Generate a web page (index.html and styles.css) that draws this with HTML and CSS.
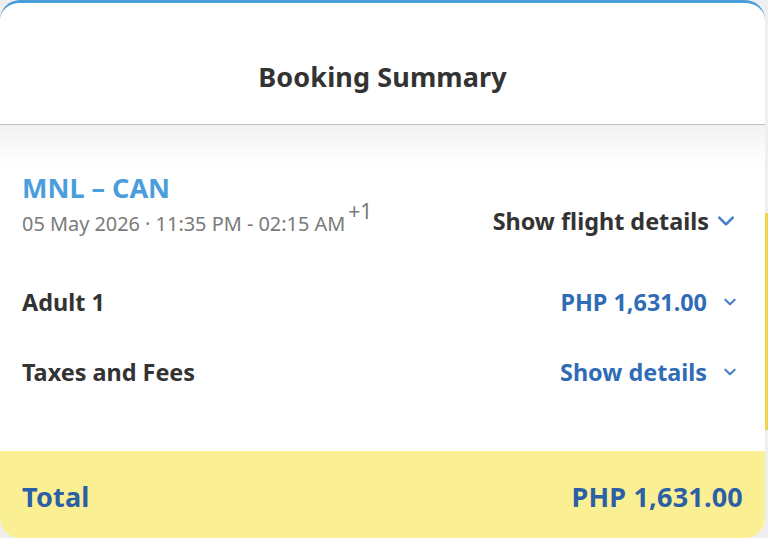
FILE: index.html
```html
<!DOCTYPE html>
<html lang="en">
<head>
<meta charset="utf-8">
<title>Booking Summary</title>
<link rel="stylesheet" href="styles.css">
</head>
<body>
<div class="page">
  <section class="card">
    <header class="card-header">
      <h1 class="title">Booking Summary</h1>
    </header>
    <div class="card-body">
      <div class="flight">
        <div class="flight-info">
          <div class="route">MNL – CAN</div>
          <div class="schedule">05 May 2026 · 11:35 PM - 02:15 AM<sup class="plus">+1</sup></div>
        </div>
        <button class="toggle toggle-dark">Show flight details
          <svg class="chev chev-lg" viewBox="0 0 16 10"><path d="M2 2l6 6 6-6" fill="none" stroke="currentColor" stroke-width="2.4" stroke-linecap="round" stroke-linejoin="round"/></svg>
        </button>
      </div>
      <div class="row">
        <span class="label">Adult 1</span>
        <button class="toggle toggle-blue">PHP 1,631.00
          <svg class="chev chev-sm" viewBox="0 0 12 8"><path d="M2 2l4 4 4-4" fill="none" stroke="currentColor" stroke-width="1.8" stroke-linecap="round" stroke-linejoin="round"/></svg>
        </button>
      </div>
      <div class="row">
        <span class="label">Taxes and Fees</span>
        <button class="toggle toggle-blue">Show details
          <svg class="chev chev-sm" viewBox="0 0 12 8"><path d="M2 2l4 4 4-4" fill="none" stroke="currentColor" stroke-width="1.8" stroke-linecap="round" stroke-linejoin="round"/></svg>
        </button>
      </div>
    </div>
    <footer class="total">
      <span class="total-label">Total</span>
      <span class="total-value">PHP 1,631.00</span>
    </footer>
  </section>
  <div class="side">
    <div class="side-gap"></div>
    <div class="side-yellow"></div>
  </div>
</div>
</body>
</html>
```

FILE: styles.css
```css
* { box-sizing: border-box; }
html, body { margin: 0; padding: 0; }
body {
  background: #efefef;
  font-family: "Noto Sans", "Open Sans", Arial, sans-serif;
  width: 768px;
  height: 538px;
  overflow: hidden;
}
.page {
  display: flex;
  width: 768px;
  height: 538px;
}
.card {
  width: 765px;
  height: 538px;
  background: #fff;
  border-top: 3px solid #4a9edb;
  border-radius: 20px;
  overflow: hidden;
  display: flex;
  flex-direction: column;
  flex-shrink: 0;
}
.card-header {
  height: 122px;
  border-bottom: 1px solid #bdbdbd;
  display: flex;
  align-items: center;
  justify-content: center;
  padding-top: 26px;
}
.title {
  margin: 0;
  font-size: 27px;
  font-weight: 700;
  color: #333;
  letter-spacing: 0.1px;
}
.card-body {
  flex: 1;
  background: linear-gradient(to bottom, #f2f2f2 0px, #ffffff 40px);
  padding: 45px 28px 0 22px;
}
.flight {
  display: flex;
  justify-content: space-between;
  align-items: flex-start;
}
.route {
  font-size: 27px;
  font-weight: 700;
  color: #4a9edb;
  line-height: 36px;
}
.schedule {
  font-size: 19.9px;
  color: #7a7a7a;
  line-height: 28px;
  margin-top: 3px;
}
.plus {
  font-size: 21px;
  vertical-align: 0;
  position: relative;
  top: -12px;
  margin-left: 3px;
}
.toggle {
  border: 0;
  background: none;
  padding: 0;
  font-family: inherit;
  font-weight: 700;
  font-size: 23.4px;
  display: flex;
  align-items: center;
  cursor: pointer;
}
.toggle-dark {
  color: #333;
  margin-top: 35px;
  margin-right: 2px;
}
.toggle-blue {
  color: #2f6cb5;
}
.chev { color: #4a7fc8; }
.chev-lg {
  width: 18px;
  height: 12px;
  margin-left: 8px;
}
.chev-sm {
  width: 14px;
  height: 10px;
  margin-left: 16px;
}
.row {
  display: flex;
  justify-content: space-between;
  align-items: center;
  height: 32px;
  margin-top: 48px;
}
.row + .row { margin-top: 38px; }
.label {
  font-size: 23.4px;
  font-weight: 700;
  color: #333;
}
.total {
  height: 87px;
  flex-shrink: 0;
  background: #fbef94;
  display: flex;
  justify-content: space-between;
  align-items: center;
  padding: 4px 22px 0 22px;
  color: #2b5fa6;
  font-weight: 700;
  font-size: 27px;
  letter-spacing: 0.2px;
}
.side {
  width: 3px;
  display: flex;
  flex-direction: column;
}
.side-gap { height: 213px; }
.side-yellow {
  height: 217px;
  background: #efd44a;
}
```
